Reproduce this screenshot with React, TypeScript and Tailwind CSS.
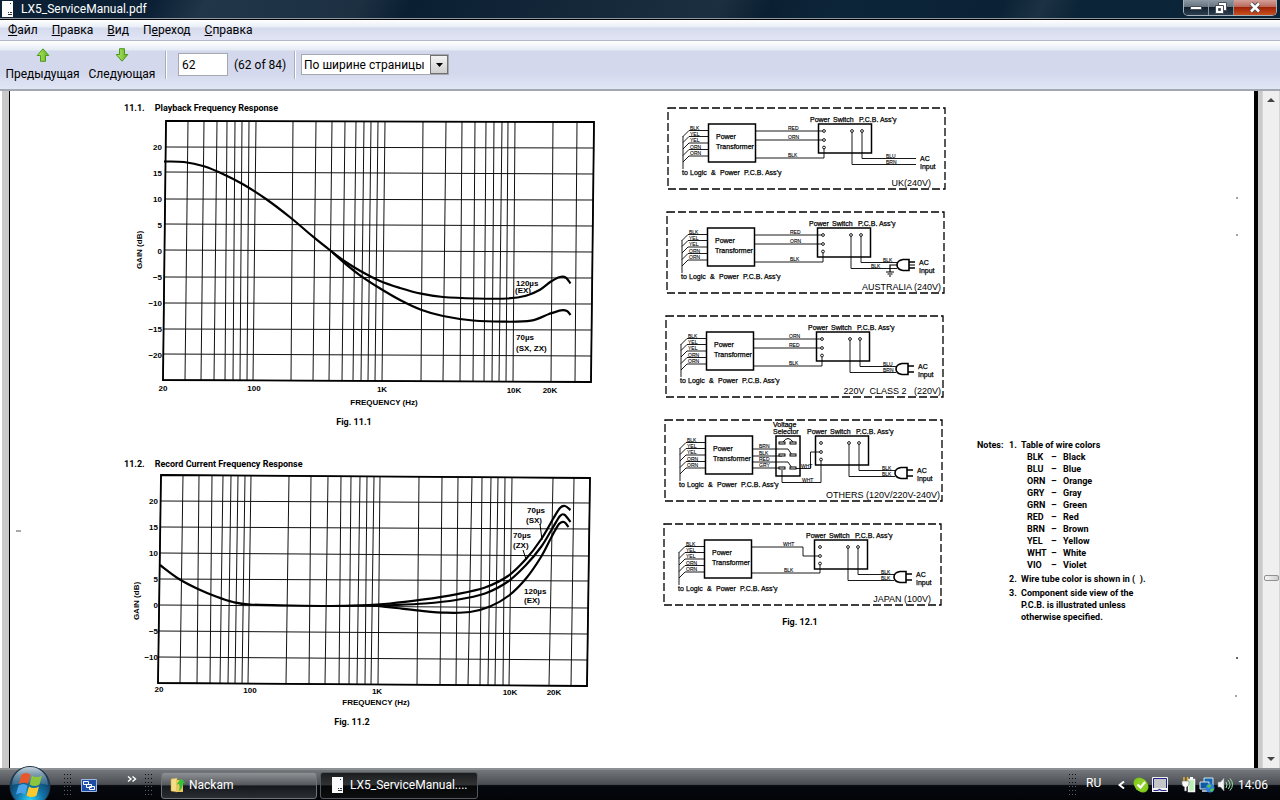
import { useState } from 'react';
import type { ReactNode } from 'react';

type Point = [number, number];

type ChartProps = {
  label: string;
  viewBox: string;
  className: string;
  top: number[];
  bottom: number[];
  rows: Point[];
  curves: Point[][];
  children: ReactNode;
};

const playback = {
  top: [166, 188, 204, 217, 227, 235, 242, 249, 256, 293, 316, 332, 345, 356, 364, 371, 378, 385, 423, 446, 462, 475, 486, 494, 502, 508, 515, 553, 577, 594],
  bottom: [163, 185, 201, 214, 225, 233, 240, 247, 253, 291, 313, 329, 342, 353, 361, 368, 375, 382, 421, 443, 460, 473, 484, 492, 499, 506, 513, 551, 575, 591],
  rows: [[121, 122], [147, 148], [172, 174], [199, 200], [224, 226], [250, 252], [277, 278], [303, 304], [329, 330], [354, 356], [380, 382]] as Point[],
  curves: [
    [[164, 161.5], [184, 162], [204, 166.3], [224, 174.5], [243, 184.3], [266, 199], [291, 218], [313, 236.7], [331, 251], [345, 261.5], [360, 270.7], [380, 281], [400, 288], [421, 293.7], [443, 297], [476, 298.5], [507, 298.5], [526, 295.7], [540, 289.7], [551, 281.5], [560, 277], [566, 277.7], [570.5, 283.5]],
    [[331, 251], [345, 263.5], [360, 275.3], [381, 289], [401, 300.5], [421, 309.7], [443, 316], [473, 320.5], [503, 321.7], [531, 320.7], [549, 314], [561, 310.3], [567, 311], [570.5, 315]],
  ] as Point[][],
};

const record = {
  top: [161, 183, 199, 212, 223, 231, 238, 245, 251, 289, 311, 328, 341, 351, 360, 367, 374, 380, 419, 442, 458, 472, 482, 491, 498, 505, 512, 553, 574, 590],
  bottom: [158, 180, 197, 210, 220, 228, 235, 242, 248, 286, 309, 325, 339, 349, 357, 365, 371, 378, 417, 440, 456, 468, 480, 488, 495, 503, 509, 549, 571, 587],
  rows: [[475, 478], [501, 503], [527, 529], [553, 556], [579, 581], [605, 608], [631, 634], [657, 660], [683, 686]] as Point[],
  curves: [
    [[160, 565], [179, 579], [198, 589], [216, 596.5], [233, 602], [250, 604.5], [290, 605.5], [330, 606], [360, 605.3], [390, 603.5], [422, 599.7], [456, 594.3], [485, 587.5], [508, 576], [526, 559], [541, 539.5], [553, 519], [560, 508], [565, 506], [570.5, 510]],
    [[370, 605.5], [395, 605], [425, 603.5], [456, 600], [485, 593.5], [508, 581.5], [526, 565], [541, 547], [552, 529], [560, 516], [564.5, 514.7], [570.5, 522]],
    [[370, 605], [396, 608], [420, 610.7], [446, 612.7], [470, 612], [490, 606.5], [509, 595.5], [526, 578.5], [541, 557], [551, 538], [559, 524], [564, 522], [568.5, 527]],
  ] as Point[][],
};

const wireColors = [
  ['BLK', 'Black'],
  ['BLU', 'Blue'],
  ['ORN', 'Orange'],
  ['GRY', 'Gray'],
  ['GRN', 'Green'],
  ['RED', 'Red'],
  ['BRN', 'Brown'],
  ['YEL', 'Yellow'],
  ['WHT', 'White'],
  ['VIO', 'Violet'],
];

const menu = [
  ['', 'Ф', 'айл'],
  ['', 'П', 'равка'],
  ['', 'В', 'ид'],
  ['П', 'е', 'реход'],
  ['', 'С', 'правка'],
];

// Catmull-Rom through the measured points
function smooth(points: Point[]) {
  let d = `M${points[0][0]} ${points[0][1]}`;
  for (let i = 0; i < points.length - 1; i++) {
    const p0 = points[i - 1] ?? points[i];
    const p1 = points[i];
    const p2 = points[i + 1];
    const p3 = points[i + 2] ?? p2;
    d += ` C${p1[0] + (p2[0] - p0[0]) / 6} ${p1[1] + (p2[1] - p0[1]) / 6} ${p2[0] - (p3[0] - p1[0]) / 6} ${p2[1] - (p3[1] - p1[1]) / 6} ${p2[0]} ${p2[1]}`;
  }
  return d;
}

function Chart({ label, viewBox, className, top, bottom, rows, curves, children }: ChartProps) {
  const last = top.length - 1;
  const end = rows.length - 1;
  return (
    <svg role="img" aria-label={label} viewBox={viewBox} className={className}>
      <g stroke="#111" strokeWidth="1">
        {top.map((x, i) => (
          <line
            key={x}
            x1={x}
            y1={rows[0][0] + ((rows[0][1] - rows[0][0]) * i) / last}
            x2={bottom[i]}
            y2={rows[end][0] + ((rows[end][1] - rows[end][0]) * i) / last}
          />
        ))}
        {rows.map(([left, right], i) => (
          <line
            key={left}
            x1={top[0] + ((bottom[0] - top[0]) * i) / end}
            y1={left}
            x2={top[last] + ((bottom[last] - top[last]) * i) / end}
            y2={right}
          />
        ))}
      </g>
      <path
        d={`M${top[0]} ${rows[0][0]} L${top[last]} ${rows[0][1]} L${bottom[last]} ${rows[end][1]} L${bottom[0]} ${rows[end][0]}Z`}
        fill="none"
        stroke="#000"
        strokeWidth="1.8"
      />
      <g fill="none" stroke="#000" strokeWidth="2.2">
        {curves.map((points, i) => (
          <path key={i} d={smooth(points)} />
        ))}
      </g>
      <g className="font-['Liberation_Sans',Arial,sans-serif] text-[8px] font-bold">{children}</g>
    </svg>
  );
}

function GainLabels({ values, x, y }: { values: string[]; x: number; y: number }) {
  return (
    <g textAnchor="end">
      {values.map((value, i) => (
        <text key={value} x={x} y={y + i * 26}>{value}</text>
      ))}
    </g>
  );
}

function Plug({ grounded = false }: { grounded?: boolean }) {
  return (
    <g>
      <path d="M242 47.5h-6q-6 1-6 5.5t6 5.5h6z" fill="#fff" strokeWidth="1.6" />
      <path d="M242 50h6M242 56h6" strokeWidth="1.6" />
      {grounded && <path d="M242 53h6M230 53h-7v7M219 60h8M220.5 62h5M222 64h2" strokeWidth="1.2" />}
    </g>
  );
}

function Schematic({
  name,
  nameX,
  skew,
  outputs,
  mainsX,
  plug,
  children,
}: {
  name: string;
  nameX: number;
  skew: number;
  outputs: [string, number, number][];
  mainsX: number;
  plug?: ReactNode;
  children: ReactNode;
}) {
  return (
    <svg
      role="img"
      aria-label={`Wiring, ${name}`}
      viewBox="0 0 284 96"
      className="block h-24 w-full font-['Liberation_Sans',Arial,sans-serif]"
    >
      <g transform={`translate(${2 + skew} 8)`}>
        <rect width="277" height="81" fill="none" stroke="#000" strokeWidth="1.3" strokeDasharray="8 3" />
        <g fill="none" stroke="#000">
          <rect x="40.5" y="16" width="47" height="38" strokeWidth="1.5" />
          <rect x="150.5" y="16" width="53" height="29" strokeWidth="1.5" />
          {[22.5, 28.5, 35, 41.5, 48].map((y) => (
            <path key={y} d={`M40.5 ${y}H21L15 ${y + 6}`} strokeWidth="0.9" />
          ))}
          <path d="M15 28V61" strokeWidth="0.9" />
          <path d={`M194 23V50.5H${mainsX}M184 23V56.5H${mainsX}`} strokeWidth="0.9" />
          {children}
          {plug}
        </g>
        <g fill="#fff" stroke="#000" strokeWidth="0.9">
          <circle cx="156" cy="23" r="1.4" />
          <circle cx="156" cy="32" r="1.4" />
          <circle cx="156" cy="39.5" r="1.4" />
          <circle cx="184" cy="23" r="1.4" />
          <circle cx="194" cy="23" r="1.4" />
        </g>
        <g className="text-[5px]" stroke="#000" strokeWidth="0.1">
          {['BLK', 'YEL', 'YEL', 'ORN', 'ORN'].map((wire, i) => (
            <text key={i} x="22" y={21.5 + i * 6.4}>{wire}</text>
          ))}
          {outputs.map(([wire, x, y], i) => (
            <text key={i} x={x} y={y}>{wire}</text>
          ))}
        </g>
        <g className="text-[7px]" stroke="#000" strokeWidth="0.25">
          <text x="48" y="31">Power</text>
          <text x="48" y="41">Transformer</text>
          <text x="14" y="67">to</text>
          <text x="22" y="67">Logic</text>
          <text x="43" y="67">&amp;</text>
          <text x="52" y="67">Power</text>
          <text x="76" y="67">P.C.B. Ass’y</text>
          <text x="142" y="14">Power</text>
          <text x="165" y="14">Switch</text>
          <text x="191" y="14">P.C.B. Ass’y</text>
          <text x="252" y="53">AC</text>
          <text x="252" y="61">Input</text>
        </g>
        <text x={nameX} y="78" textAnchor="end" className="text-[9px]">{name}</text>
      </g>
    </svg>
  );
}

const straightWires = <path d="M87 23H156M87 32H156M87 50H156V39.5" strokeWidth="0.9" />;

function VoltageSelector() {
  return (
    <g>
      <rect x="111" y="16" width="24" height="40" strokeWidth="1.5" />
      <path d="M118 22q5-7 10 0" strokeWidth="1" />
      <path d="M87 29H123L127 35M87 36H117M87 42H123L127 48M87 48H117M128 48.5H145.5V32H156M117 50V62.5H156V39.5" strokeWidth="0.9" />
      <g fill="#fff" strokeWidth="1">
        {[23, 35, 48].map((y) => (
          <g key={y}>
            <rect x="114" y={y - 1} width="6" height="2" />
            <rect x="125" y={y - 1} width="6" height="2" />
          </g>
        ))}
      </g>
      <g className="text-[7px]" fill="#000" strokeWidth="0.25">
        <text x="108" y="7">Voltage</text>
        <text x="108" y="14">Selector</text>
      </g>
    </g>
  );
}

function Notes() {
  return (
    <section className="mt-[339px] ml-[31px] flex text-[9px] leading-3 font-bold">
      <h2 className="w-8">Notes:</h2>
      <ol className="flex flex-col gap-0.5">
        <li className="flex">
          <span className="w-3">1.</span>
          <div>
            <p>Table of wire colors</p>
            <table className="ml-1.5">
              <tbody>
                {wireColors.map(([code, color]) => (
                  <tr key={code}>
                    <td className="w-6 p-0">{code}</td>
                    <td className="w-3 p-0">–</td>
                    <td className="p-0">{color}</td>
                  </tr>
                ))}
              </tbody>
            </table>
          </div>
        </li>
        <li className="flex">
          <span className="w-3">2.</span>
          <p>Wire tube color is shown in (&nbsp; ).</p>
        </li>
        <li className="flex">
          <span className="w-3">3.</span>
          <p>
            Component side view of the
            <br />
            P.C.B. is illustrated unless
            <br />
            otherwise specified.
          </p>
        </li>
      </ol>
    </section>
  );
}

function DocumentPage() {
  return (
    <main className="flex min-w-0 flex-1 items-start overflow-hidden bg-white pt-[9px] font-[Roboto,sans-serif] text-black">
      <svg viewBox="0 0 112 640" className="h-160 w-28 shrink-0" aria-hidden="true">
        <path d="M6 431h5" stroke="#555" />
      </svg>
      <div className="flex w-[480px] shrink-0 flex-col gap-6">
        <section>
          <h2 className="flex gap-2.5 pl-0.5 text-[9px] leading-4 font-bold">
            <span>11.1.</span>Playback Frequency Response
          </h2>
          <figure>
            <Chart label="Playback frequency response" viewBox="122 116 480 296" className="block h-[296px] w-full" {...playback}>
              <GainLabels values={['20', '15', '10', '5', '0', '−5', '−10', '−15', '−20']} x={162} y={150} />
              <text x="163" y="391" textAnchor="middle">20</text>
              <text x="254" y="391" textAnchor="middle">100</text>
              <text x="382" y="392" textAnchor="middle">1K</text>
              <text x="514" y="393" textAnchor="middle">10K</text>
              <text x="550" y="393" textAnchor="middle">20K</text>
              <text x="384" y="405" textAnchor="middle">FREQUENCY (Hz)</text>
              <text transform="translate(142 250) rotate(-90)" textAnchor="middle">GAIN (dB)</text>
              <path d="M515 280h24v7h-9v7h-15z" fill="#fff" />
              <text x="516" y="286">120µs</text>
              <text x="515" y="293">(EX)</text>
              <text x="516" y="340">70µs</text>
              <text x="516" y="351">(SX, ZX)</text>
            </Chart>
            <figcaption className="pr-4 text-center text-[9px] leading-5 font-bold">Fig. 11.1</figcaption>
          </figure>
        </section>
        <section>
          <h2 className="flex gap-2.5 pl-0.5 text-[9px] leading-4 font-bold">
            <span>11.2.</span>Record Current Frequency Response
          </h2>
          <figure>
            <Chart label="Record current frequency response" viewBox="122 472 480 240" className="block h-60 w-full" {...record}>
              <GainLabels values={['20', '15', '10', '5', '0', '−5', '−10']} x={158} y={504} />
              <text x="159" y="692" textAnchor="middle">20</text>
              <text x="250" y="693" textAnchor="middle">100</text>
              <text x="377" y="694" textAnchor="middle">1K</text>
              <text x="510" y="695" textAnchor="middle">10K</text>
              <text x="554" y="695" textAnchor="middle">20K</text>
              <text x="376" y="705" textAnchor="middle">FREQUENCY (Hz)</text>
              <text transform="translate(139 601) rotate(-90)" textAnchor="middle">GAIN (dB)</text>
              <path d="M540 524l2 16M523 550l3 9" stroke="#000" />
              <text x="527" y="513">70µs</text>
              <text x="526" y="523">(SX)</text>
              <text x="513" y="538">70µs</text>
              <text x="513" y="548">(ZX)</text>
              <text x="524" y="594">120µs</text>
              <text x="524" y="603">(EX)</text>
            </Chart>
            <figcaption className="pr-5 text-center text-[9px] leading-5 font-bold">Fig. 11.2</figcaption>
          </figure>
        </section>
      </div>
      <figure className="ml-15 w-[284px] shrink-0">
        <div className="flex flex-col gap-2">
          <Schematic
            name="UK(240V)"
            nameX={263}
            skew={4}
            outputs={[['RED', 120, 22], ['ORN', 120, 31], ['BLK', 120, 49], ['BLU', 218, 49.5], ['BRN', 218, 55.5]]}
            mainsX={248}
          >
            {straightWires}
          </Schematic>
          <Schematic
            name="AUSTRALIA (240V)"
            nameX={274}
            skew={3}
            outputs={[['RED', 123, 22], ['ORN', 123, 31], ['BLK', 123, 49], ['BLK', 216, 49.5], ['BLK', 204, 55.5]]}
            mainsX={230}
            plug={<Plug grounded />}
          >
            {straightWires}
          </Schematic>
          <Schematic
            name={'220V\u00a0 CLASS 2\u00a0 \u00a0(220V)'}
            nameX={275}
            skew={2}
            outputs={[['ORN', 123, 22], ['RED', 123, 31], ['BLK', 123, 49], ['BLU', 217, 49.5], ['BRN', 217, 55.5]]}
            mainsX={230}
            plug={<Plug />}
          >
            {straightWires}
          </Schematic>
          <Schematic
            name="OTHERS (120V/220V-240V)"
            nameX={275}
            skew={1}
            outputs={[['BRN', 94, 28], ['BLK', 94, 34.5], ['RED', 94, 41], ['GRY', 94, 47], ['WHT', 136, 47.5], ['WHT', 137, 61.5], ['BLK', 217, 49.5], ['BLK', 217, 55.5]]}
            mainsX={230}
            plug={<Plug />}
          >
            <VoltageSelector />
          </Schematic>
          <Schematic
            name="JAPAN (100V)"
            nameX={267}
            skew={0}
            outputs={[['WHT', 119, 22], ['BLK', 120, 48], ['BLK', 217, 49.5], ['BLK', 217, 55.5]]}
            mainsX={230}
            plug={<Plug />}
          >
            <path d="M87 23H139V32H156M87 49H156V39.5" strokeWidth="0.9" />
          </Schematic>
        </div>
        <figcaption className="pr-2 text-center text-[9px] leading-5 font-bold">Fig. 12.1</figcaption>
      </figure>
      <Notes />
      <svg viewBox="0 0 20 640" className="ml-auto h-160 w-5 shrink-0" aria-hidden="true">
        <g fill="#333">
          <circle cx="3" cy="98" r="0.8" />
          <circle cx="3" cy="135" r="0.8" />
          <circle cx="3" cy="558" r="1" />
          <circle cx="2" cy="596" r="0.8" />
        </g>
      </svg>
    </main>
  );
}

function Grip() {
  return (
    <svg viewBox="0 0 9 22" className="h-[22px] w-[9px] shrink-0" aria-hidden="true">
      {[0, 1, 2].map((col) =>
        [0, 1, 2, 3, 4, 5].map((row) => (
          <rect key={`${col}-${row}`} x={col * 3} y={row * 4} width="1" height="1" fill={row < 3 ? '#0a0c0e' : '#5b6066'} />
        ))
      )}
    </svg>
  );
}

function SheetIcon({ className }: { className: string }) {
  return (
    <svg viewBox="0 0 11 16" className={className} aria-hidden="true">
      <path d="M0 0h11v16H0z" fill="#fbfbfb" />
      <path d="M8 2.5h1M6 11.5h1M8 11.5h2M6 13.5h4" stroke="#333" />
    </svg>
  );
}

function ToolArrow({ down = false }: { down?: boolean }) {
  return (
    <svg viewBox="0 0 14 14" className="size-3.5" aria-hidden="true">
      <defs>
        <linearGradient id="leaf" x1="0" x2="1">
          <stop offset="0" stopColor="#b9e76a" />
          <stop offset="1" stopColor="#5fb324" />
        </linearGradient>
      </defs>
      <path
        d={down ? 'M4.5 .7h5v5.8h3.3L7 13.2 1.2 6.5h3.3z' : 'M7 .8l5.8 6.7H9.5v5.8h-5V7.5H1.2z'}
        fill="url(#leaf)"
        stroke="#4a9a16"
        strokeLinejoin="round"
      />
    </svg>
  );
}

function TitleBar() {
  return (
    <header className="flex h-5 items-start justify-between border-b border-black bg-[linear-gradient(115deg,#0c2136_0%,#0b2034_12%,#22364a_16%,#1c3042_28%,#0b1f32_32%,#1b2f40_56%,#0b1f32_60%,#0d2539_65%,#0b2236_78%,#1c3243_81%,#0c2438_84%)] shadow-[inset_0_-1px_0_#8d979f]">
      <div className="flex h-[18px] items-center gap-2 pl-0.5">
        <SheetIcon className="h-4 w-[11px]" />
        <h1 className="text-[12px] leading-[18px] text-white">LX5_ServiceManual.pdf</h1>
      </div>
      <div className="mr-[3px] flex h-4 overflow-hidden rounded-b-[5px] border border-t-0 border-[#a6b0b8]">
        <button aria-label="Свернуть" className="flex w-[25px] items-center justify-center border-r border-[#8b959d] bg-[linear-gradient(#8d98a2_0%,#67737f_45%,#12202e_50%,#2c3f52_100%)]">
          <svg viewBox="0 0 12 6" className="h-1.5 w-3"><path d="M.5 1.5h11v3H.5z" fill="#fff" stroke="#4b4f57" /></svg>
        </button>
        <button aria-label="Восстановить" className="flex w-[25px] items-center justify-center border-r border-[#8b959d] bg-[linear-gradient(#8d98a2_0%,#67737f_45%,#12202e_50%,#2c3f52_100%)]">
          <svg viewBox="0 0 12 12" className="size-3">
            <path d="M3.5 .5h8v8h-8z" fill="#fff" stroke="#4b4f57" />
            <path d="M.5 3.5h8v8h-8z" fill="#fff" stroke="#4b4f57" />
            <path d="M3.5 6.5h2v2h-2z" fill="#33475a" stroke="#4b4f57" />
          </svg>
        </button>
        <button aria-label="Закрыть" className="flex w-[42px] items-center justify-center bg-[linear-gradient(#d3a098_0%,#bb6a5c_45%,#a12306_50%,#c8501f_100%)]">
          <svg viewBox="0 0 12 11" className="h-[11px] w-3">
            <path d="M2 1.5l8 8M10 1.5l-8 8" stroke="#4b4f57" strokeWidth="4.5" />
            <path d="M2 1.5l8 8M10 1.5l-8 8" stroke="#fff" strokeWidth="2.5" />
          </svg>
        </button>
      </div>
    </header>
  );
}

function Toolbar() {
  const [page, setPage] = useState('62');
  return (
    <div className="flex h-[50px] items-start border-b-2 border-[#a5a8b0] bg-[linear-gradient(#ffffff_0px,#e6ebf5_9px,#d3d8ec_10px,#d3d8ec_32px,#e1e6f6_48px)] pl-[7px]">
      <button className="mt-[7px] flex w-[71px] flex-col items-center gap-1 leading-4 whitespace-nowrap">
        <ToolArrow />
        Предыдущая
      </button>
      <button className="mt-[7px] ml-[11px] flex w-[66px] flex-col items-center gap-1 leading-4 whitespace-nowrap">
        <ToolArrow down />
        Следующая
      </button>
      <div className="mt-[10px] ml-[10px] h-7 w-0.5 border-r border-white bg-[#a9adb8]" />
      <input
        aria-label="Страница"
        value={page}
        onChange={(e) => setPage(e.target.value)}
        className="mt-3 ml-[11px] h-[23px] w-[50px] border border-[#a5a8ae] bg-white px-[3px] outline-none"
      />
      <span className="mt-4 ml-1.5 w-[60px] leading-4 whitespace-nowrap">(62 of 84)</span>
      <div className="mt-[10px] h-7 w-0.5 border-r border-white bg-[#a9adb8]" />
      <div className="relative mt-[13px] ml-[5px] w-[148px]">
        <select aria-label="Масштаб" className="block h-[21px] w-full appearance-none border border-[#a5a8ae] bg-white pl-0.5 outline-none">
          <option>По ширине страницы</option>
        </select>
        <span className="pointer-events-none absolute top-px right-px flex h-[19px] w-[18px] items-center justify-center border border-[#707070] bg-[linear-gradient(#f4f4f4,#cfcfcf)]">
          <svg viewBox="0 0 7 4" className="h-1 w-[7px]"><path d="M0 0h7L3.5 4z" /></svg>
        </span>
      </div>
    </div>
  );
}

function Scrollbar() {
  return (
    <div className="flex w-[18px] shrink-0 flex-col items-center border-r border-l border-[#d6d6d6] bg-[#efefef]">
      <button aria-label="Вверх" className="flex h-[18px] w-full items-center justify-center">
        <svg viewBox="0 0 8 4" className="h-1 w-2"><path d="M4 0l4 4H0z" fill="#444" /></svg>
      </button>
      <div className="grow-[469]" />
      <div className="h-[6px] w-[15px] rounded-[2px] border border-[#909090] bg-[linear-gradient(90deg,#f6f6f6,#cfcfcf)]" />
      <div className="grow-[170]" />
      <button aria-label="Вниз" className="flex h-[18px] w-full items-center justify-center">
        <svg viewBox="0 0 8 4" className="h-1 w-2"><path d="M0 0h8L4 4z" fill="#444" /></svg>
      </button>
    </div>
  );
}

function StartOrb() {
  return (
    <svg viewBox="0 0 42 34" className="absolute bottom-0 left-[9px] h-[34px] w-[42px]" aria-hidden="true">
      <defs>
        <radialGradient id="orb" cx="0.5" cy="0.85" r="0.75">
          <stop offset="0" stopColor="#2fd4f7" />
          <stop offset="0.45" stopColor="#1272a8" />
          <stop offset="1" stopColor="#0e2f4e" />
        </radialGradient>
        <linearGradient id="gloss" x1="0" y1="0" x2="0" y2="1">
          <stop offset="0" stopColor="#cfdde6" stopOpacity="0.95" />
          <stop offset="1" stopColor="#6d94ad" stopOpacity="0.4" />
        </linearGradient>
      </defs>
      <circle cx="21" cy="20.5" r="20" fill="url(#orb)" stroke="#27394a" />
      <path d="M3 19A18 18 0 0 1 39 19Q21 14 3 19z" fill="url(#gloss)" />
      <path d="M12.500 8.500q5-3 9 0l-2.500 9.500q-4-3-9 0z" fill="#e8562a" />
      <path d="M23 9.500q4.500 3 10 0l-2.500 9q-5 3-10 0z" fill="#8cc63c" />
      <path d="M9.500 19.500q5-3 9 0l-2.500 9q-4-3-9 0z" fill="#4aa3e6" />
      <path d="M20 20.500q4.500 3 10 0l-2.500 9q-5 3-10 0z" fill="#fdc92d" />
    </svg>
  );
}

function TrayIcons() {
  return (
    <>
      <svg viewBox="0 0 16 16" className="ml-2 size-4" aria-hidden="true">
        <circle cx="6" cy="6" r="5.5" fill="#7cc51c" />
        <circle cx="10" cy="10" r="5.5" fill="#7cc51c" />
        <circle cx="8" cy="8" r="6.5" fill="#8ad022" />
        <path d="M4.5 7.5l3 3L12 5" fill="none" stroke="#fff" strokeWidth="2.2" />
      </svg>
      <svg viewBox="0 0 16 16" className="ml-[3px] size-4" aria-hidden="true">
        <path d="M.5 .5h15v11H.5z" fill="#c3c5c9" stroke="#f2f2f2" />
        <path d="M1.5 11V1.5h13V11" fill="none" stroke="#23238c" />
        <path d="M0 11h16v4H0z" fill="#f2f2f2" />
        <path d="M1.5 13.5h4l2-1 2 1h5" fill="none" stroke="#23238c" strokeWidth="1.2" />
      </svg>
      <svg viewBox="0 0 16 16" className="ml-[13px] size-4" aria-hidden="true">
        <path d="M7.5 2.500h6v12h-6z" fill="#b8efb4" stroke="#f4f4f4" strokeWidth="1.5" />
        <path d="M9 1h3" stroke="#fff" strokeWidth="2" />
        <path d="M3 0v4M6.500 0v4" stroke="#e8b52a" strokeWidth="1.5" />
        <path d="M1 4h7v3q0 2-2.500 3v4h-2v-4Q1 9 1 7z" fill="#fafafa" stroke="#777" strokeWidth="0.6" />
      </svg>
      <svg viewBox="0 0 16 16" className="ml-0.5 size-4" aria-hidden="true">
        <path d="M5 1h9v8H5z" fill="#1767b0" stroke="#d4e7f6" />
        <path d="M1 5h9v7H1z" fill="#1258a0" stroke="#d4e7f6" />
        <path d="M3 14h6" stroke="#d4e7f6" strokeWidth="1.5" />
        <circle cx="11" cy="11" r="4.5" fill="#2f7de0" />
        <path d="M8 9q2-3 4-1 0 3-3 3zM11 13q2-3 4-1-1 3-3 3z" fill="#55c64a" />
      </svg>
      <svg viewBox="0 0 16 16" className="ml-0.5 size-4" aria-hidden="true">
        <path d="M1 5h2.500L7 1v13l-3.500-4H1z" fill="#f4f4f4" stroke="#85898d" strokeWidth="0.6" />
        <path d="M9 5q2 3 0 6M11 3q4 5 0 9M13 1.500q5 6 0 12" fill="none" stroke="#9fe3ae" />
      </svg>
    </>
  );
}

function Taskbar() {
  return (
    <footer className="relative flex h-8 items-center border-t-2 border-t-[#8c9092] bg-[linear-gradient(#74777a_0%,#4a4e53_48%,#06090e_52%,#020408_100%)] pr-3 pl-16 text-white">
      <button aria-label="Пуск"><StartOrb /></button>
      <Grip />
      <button aria-label="Переключение между окнами" className="ml-2">
        <svg viewBox="0 0 16 13" className="h-[13px] w-4">
          <path d="M.5 .5h15v12H.5z" fill="#1b4da5" stroke="#9db7e0" />
          <path d="M2.5 2.5h5v3h-5zM5.500 5.500h5v3h-5zM8.500 7.500h5v3h-5z" fill="#2457ab" stroke="#fff" />
        </svg>
      </button>
      <button aria-label="Ещё" className="mb-3 ml-[30px]">
        <svg viewBox="0 0 10 6" className="h-1.5 w-2.5"><path d="M1 .5l3 2.500-3 2.500M5.500 .5l3 2.500-3 2.500" fill="none" stroke="#fff" strokeWidth="1.4" /></svg>
      </button>
      <div className="ml-2"><Grip /></div>
      <button className="ml-[7px] flex h-[27px] w-[156px] items-center gap-[3px] rounded-[3px] border border-[#6f7377] bg-[linear-gradient(#8f9295_0%,#55595d_47%,#15191d_52%,#2a2e32_100%)] px-2">
        <svg viewBox="0 0 16 16" className="size-4" aria-hidden="true">
          <path d="M1 2l6-1v14l-6-1z" fill="#f5dc86" stroke="#c9a545" strokeWidth="0.5" />
          <path d="M6 3h7v12H6z" fill="#e9c75f" />
          <path d="M6.500 7.500L11 1.500l4.500 5-2.500-.5q0 5-4 8 1.500-4 0-7z" fill="#35c235" />
        </svg>
        Nackam
      </button>
      <button className="ml-[3px] flex h-[27px] w-[158px] items-center gap-[7px] rounded-[3px] border border-[#55595d] bg-[linear-gradient(#1b1d1f_0%,#303234_47%,#060708_52%,#0c0e10_100%)] px-[11px]">
        <SheetIcon className="h-4 w-[11px] shrink-0" />
        LX5_ServiceManual....
      </button>
      <div className="ml-auto flex items-center">
        <Grip />
        <span className="mb-1 ml-2 w-8">RU</span>
        <button aria-label="Показать скрытые значки">
          <svg viewBox="0 0 7 8" className="h-2 w-[7px]"><path d="M6 .5L1.500 4 6 7.500" fill="none" stroke="#fff" strokeWidth="2" /></svg>
        </button>
        <TrayIcons />
        <time className="ml-[5px]">14:06</time>
      </div>
    </footer>
  );
}

export default function App() {
  return (
    <div className="flex min-h-screen flex-col bg-white font-[Roboto,'Noto_Sans',sans-serif] text-[12px] text-black">
      <TitleBar />
      <nav className="flex h-[21px] items-center gap-[14px] border-b border-[#b0b8cb] bg-[linear-gradient(#ffffff_0px,#e8edf6_7px,#d5daed_8px,#e1e5f5_20px)] pl-2">
        {menu.map(([before, key, after]) => (
          <button key={after} className="leading-5">
            {before}
            <u>{key}</u>
            {after}
          </button>
        ))}
      </nav>
      <Toolbar />
      <div className="flex flex-1 pl-0.5">
        <div className="w-2 shrink-0 border-r border-black bg-[#c9c9c9]" />
        <DocumentPage />
        <div className="w-2 shrink-0 border-l-4 border-black bg-[#c9c9c9]" />
        <Scrollbar />
      </div>
      <Taskbar />
    </div>
  );
}
